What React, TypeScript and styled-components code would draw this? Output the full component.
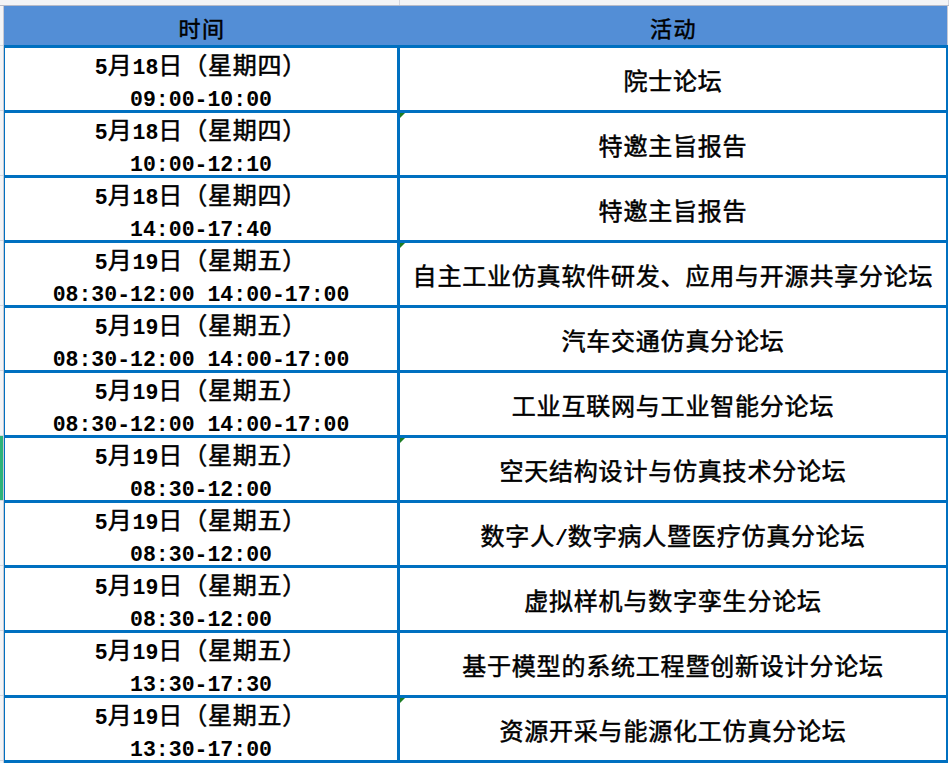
import React from "react";
import styled, { createGlobalStyle } from "styled-components";

const GlobalStyle = createGlobalStyle`
  html, body {
    margin: 0;
    padding: 0;
    background: #ffffff;
  }
`;

const Page = styled.div`
  width: 949px;
  height: 765px;
  overflow: hidden;
  background: #ffffff;
  font-family: "Noto Sans CJK SC", "Liberation Mono", sans-serif;
  color: #000000;
`;

const TopStrip = styled.div`
  display: flex;
  height: 5px;
  background: #f3f4f6;
  border-bottom: 1px solid #b6bbc9;
`;

const TopCell = styled.div<{ $w: number }>`
  width: ${(p) => p.$w}px;
  flex: none;
  border-right: 1px solid #d4d6de;
`;

const Body = styled.div`
  display: flex;
`;

const Gutter = styled.div`
  width: 3px;
  flex: none;
  background: #f3f4f6;
  border-right: 1px solid #c6c9d4;
  display: flex;
  flex-direction: column;
`;

const GutterCell = styled.div<{ $h: number; $active?: boolean }>`
  height: ${(p) => p.$h - 1}px;
  flex: none;
  border-bottom: 1px solid #d4d6de;
  background: ${(p) => (p.$active ? "#2db37a" : "transparent")};
`;

const Sheet = styled.div`
  width: 944px;
  flex: none;
`;

const Header = styled.div`
  height: 39px;
  background: #538ed6;
  display: grid;
  grid-template-columns: 396px 1fr;
  border-right: 1px solid #c6c9d4;
`;

const HeaderCell = styled.div`
  display: flex;
  align-items: center;
  justify-content: center;
  font-size: 22px;
  font-weight: 400;
  letter-spacing: 1.5px;
  padding-top: 2px;
  -webkit-text-stroke: 0.5px #000;
`;

const Grid = styled.div`
  display: grid;
  grid-template-columns: 392px 546px;
  grid-auto-rows: 62px;
  gap: 3px;
  padding: 3px 2px 3px 1px;
  background: #0070c0;
`;

const Cell = styled.div`
  position: relative;
  background: #ffffff;
  display: flex;
  flex-direction: column;
  align-items: center;
  justify-content: center;
  gap: 1px;
  font-size: 24px;
  letter-spacing: 0.8px;
  white-space: nowrap;
  -webkit-text-stroke: 0.5px #000;
`;

const Line = styled.div`
  height: 31px;
  line-height: 31px;
  flex: none;
`;

const Num = styled.span`
  font-family: "Liberation Mono", monospace;
  font-size: 21.5px;
  font-weight: 700;
  letter-spacing: 0;
  line-height: 31px;
  -webkit-text-stroke: 0;
`;

const Flag = styled.span`
  position: absolute;
  left: 0;
  top: 0;
  width: 0;
  height: 0;
  border-top: 5px solid #1d7d22;
  border-right: 5px solid transparent;
`;

type Row = { date: string; time: string; event: string; flag?: boolean };

const rows: Row[] = [
  { date: "5月18日（星期四）", time: "09:00-10:00", event: "院士论坛" },
  { date: "5月18日（星期四）", time: "10:00-12:10", event: "特邀主旨报告", flag: true },
  { date: "5月18日（星期四）", time: "14:00-17:40", event: "特邀主旨报告" },
  {
    date: "5月19日（星期五）",
    time: "08:30-12:00 14:00-17:00",
    event: "自主工业仿真软件研发、应用与开源共享分论坛",
    flag: true,
  },
  { date: "5月19日（星期五）", time: "08:30-12:00 14:00-17:00", event: "汽车交通仿真分论坛" },
  { date: "5月19日（星期五）", time: "08:30-12:00 14:00-17:00", event: "工业互联网与工业智能分论坛" },
  { date: "5月19日（星期五）", time: "08:30-12:00", event: "空天结构设计与仿真技术分论坛", flag: true },
  { date: "5月19日（星期五）", time: "08:30-12:00", event: "数字人/数字病人暨医疗仿真分论坛" },
  { date: "5月19日（星期五）", time: "08:30-12:00", event: "虚拟样机与数字孪生分论坛" },
  { date: "5月19日（星期五）", time: "13:30-17:30", event: "基于模型的系统工程暨创新设计分论坛" },
  { date: "5月19日（星期五）", time: "13:30-17:00", event: "资源开采与能源化工仿真分论坛", flag: true },
];

// wrap ascii runs so digits get the narrow mono font
function Mixed({ text }: { text: string }) {
  const parts = text.split(/([\x20-\x7e]+)/).filter(Boolean);
  return (
    <Line>
      {parts.map((p, i) =>
        /^[\x20-\x7e]+$/.test(p) ? <Num key={i}>{p}</Num> : <React.Fragment key={i}>{p}</React.Fragment>
      )}
    </Line>
  );
}

export default function App() {
  return (
    <Page>
      <GlobalStyle />
      <TopStrip>
        <TopCell $w={399} />
        <TopCell $w={548} />
      </TopStrip>
      <Body>
        <Gutter>
          <GutterCell $h={40} />
          {rows.map((_, i) => (
            <GutterCell key={i} $h={65} $active={i === 6} />
          ))}
        </Gutter>
        <Sheet>
          <Header>
            <HeaderCell>时间</HeaderCell>
            <HeaderCell>活动</HeaderCell>
          </Header>
          <Grid>
            {rows.map((r, i) => (
              <React.Fragment key={i}>
                <Cell>
                  <Mixed text={r.date} />
                  <Mixed text={r.time} />
                </Cell>
                <Cell>
                  {r.flag && <Flag />}
                  <Mixed text={r.event} />
                </Cell>
              </React.Fragment>
            ))}
          </Grid>
        </Sheet>
      </Body>
    </Page>
  );
}
